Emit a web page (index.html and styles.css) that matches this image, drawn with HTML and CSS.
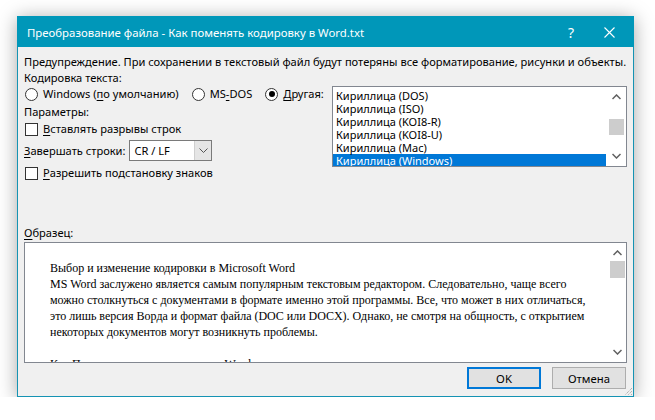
FILE: index.html
```html
<!DOCTYPE html>
<html lang="ru">
<head>
<meta charset="UTF-8" />
<title>Преобразование файла</title>
<link rel="stylesheet" href="styles.css">
</head>
<body>
<div class="dialog">
	<div class="titlebar">
		<span class="title">Преобразование файла - Как поменять кодировку в Word.txt</span>
		<span class="help">?</span>
		<svg class="close" width="11" height="11" viewBox="0 0 11 11"><path d="M0.5 0.5L10.5 10.5M10.5 0.5L0.5 10.5" stroke="#fff" stroke-width="1.1" fill="none"/></svg>
	</div>
	<div class="body">
		<div class="line">Предупреждение. При сохранении в текстовый файл будут потеряны все форматирование, рисунки и объекты.</div>
		<div class="top">
			<div class="opts">
				<div class="line">Кодировка текста:</div>
				<div class="radios">
					<label class="radio"><span class="circle"></span>Windows (<u>п</u>о умолчанию)</label>
					<label class="radio"><span class="circle"></span>MS<u>-</u>DOS</label>
					<label class="radio"><span class="circle on"></span><u>Д</u>ругая:</label>
				</div>
				<div class="line params">Параметры:</div>
				<label class="check"><span class="box"></span><u>В</u>ставлять разрывы строк</label>
				<div class="eol">
					<span><u>З</u>авершать строки:</span>
					<div class="select">
						<span class="value">CR / LF</span>
						<span class="drop"><svg width="9" height="5" viewBox="0 0 9 5"><path d="M0.5 0.5L4.5 4.5L8.5 0.5" stroke="#555" fill="none"/></svg></span>
					</div>
				</div>
				<label class="check"><span class="box"></span><u>Р</u>азрешить подстановку знаков</label>
			</div>
			<div class="list">
				<div class="items">
					<div class="item">Кириллица (DOS)</div>
					<div class="item">Кириллица (ISO)</div>
					<div class="item">Кириллица (KOI8-R)</div>
					<div class="item">Кириллица (KOI8-U)</div>
					<div class="item">Кириллица (Mac)</div>
					<div class="item sel">Кириллица (Windows)</div>
				</div>
				<div class="scroll list-scroll">
					<svg width="9" height="6" viewBox="0 0 9 6"><path d="M0.5 5L4.5 1L8.5 5" stroke="#606060" stroke-width="1.5" fill="none"/></svg>
					<span class="thumb"></span>
					<svg class="down" width="9" height="6" viewBox="0 0 9 6"><path d="M0.5 1L4.5 5L8.5 1" stroke="#606060" stroke-width="1.5" fill="none"/></svg>
				</div>
			</div>
		</div>
		<div class="line sample-label"><u>О</u>бразец:</div>
		<div class="sample">
			<div class="text">
				<div>Выбор и изменение кодировки в Microsoft Word</div>
				<div>MS Word заслужено является самым популярным текстовым редактором. Следовательно, чаще всего</div>
				<div>можно столкнуться с документами в формате именно этой программы. Все, что может в них отличаться,</div>
				<div>это лишь версия Ворда и формат файла (DOC или DOCX). Однако, не смотря на общность, с открытием</div>
				<div>некоторых документов могут возникнуть проблемы.</div>
				<div>&nbsp;</div>
				<div>Как Поменять кодировку текста в Word</div>
			</div>
			<div class="scroll sample-scroll">
				<svg width="9" height="6" viewBox="0 0 9 6"><path d="M0.5 5L4.5 1L8.5 5" stroke="#606060" stroke-width="1.5" fill="none"/></svg>
				<span class="thumb"></span>
				<svg class="down" width="9" height="6" viewBox="0 0 9 6"><path d="M0.5 1L4.5 5L8.5 1" stroke="#606060" stroke-width="1.5" fill="none"/></svg>
			</div>
		</div>
		<div class="buttons">
			<button type="button" class="btn ok">OK</button>
			<button type="button" class="btn">Отмена</button>
		</div>
	</div>
	<svg class="grip" width="10" height="10" viewBox="0 0 10 10"><path d="M9 2L2 9M9 5L5 9M9 8L8 9" stroke="#9a9a9a" stroke-dasharray="1 1" fill="none"/></svg>
</div>
</body>
</html>
```

FILE: styles.css
```css
body{
	margin: 0;
	background: #fff;
	font-family: "Noto Sans", "Liberation Sans", sans-serif;
	font-size: 11.1px;
	color: #000;
}
u{
	text-decoration-thickness: 1px;
	text-underline-offset: 2px;
}
.dialog{
	position: relative;
	margin: 16px 0 0 17px;
	width: 615px;
	height: 379px;
	border: 1px solid #1593b3;
	background: #f0f0f0;
	box-shadow: 0 2px 18px rgba(0, 0, 0, 0.35);
	display: flex;
	flex-direction: column;
}
.titlebar{
	height: 30px;
	background: #0097b9;
	color: #fff;
	display: flex;
	align-items: center;
	padding: 0 0 0 9px;
	margin: -1px -1px 0 -1px;
	border: 1px solid #0097b9;
	border-bottom: 0;
}
.title{
	flex: 1;
	font-size: 11.4px;
}
.help{
	font-size: 14px;
	width: 46px;
	text-align: center;
}
.close{
	margin: 0 18px 0 10px;
}
.body{
	flex: 1;
	display: flex;
	flex-direction: column;
	padding: 7px 6px 0 6px;
}
.line{
	height: 16px;
	line-height: 16px;
	white-space: nowrap;
}
.top{
	display: flex;
}
.opts{
	flex: none;
	display: flex;
	flex-direction: column;
}
.radios{
	display: flex;
	height: 16px;
	align-items: center;
}
.radio, .check{
	display: flex;
	align-items: center;
	white-space: nowrap;
	line-height: 16px;
}
.radio{
	margin-right: 12px;
}
.radio:last-child{
	margin-right: 0;
}
.circle{
	width: 11px;
	height: 11px;
	border: 1px solid #333;
	border-radius: 50%;
	background: #fff;
	margin: 0 5px 0 1px;
	display: flex;
	align-items: center;
	justify-content: center;
}
.circle.on::after{
	content: "";
	width: 6px;
	height: 6px;
	border-radius: 50%;
	background: #000;
}
.params{
	margin-top: 2px;
}
.check{
	height: 16px;
	margin-top: 1px;
}
.box{
	width: 11px;
	height: 11px;
	border: 1px solid #333;
	background: #fff;
	margin: 0 5px 0 1px;
}
.eol{
	display: flex;
	align-items: center;
	margin: 3px 0 3px 0;
}
.select{
	display: flex;
	width: 81px;
	height: 19px;
	border: 1px solid #7a7a7a;
	background: #fff;
	margin-left: 4px;
}
.select .value{
	flex: 1;
	line-height: 19px;
	padding-left: 4px;
}
.drop{
	width: 16px;
	background: #e5e5e5;
	border-left: 1px solid #cfcfcf;
	display: flex;
	align-items: center;
	justify-content: center;
}
.list{
	flex: none;
	margin: 16px 0 0 auto;
	width: 293px;
	height: 79px;
	border: 1px solid #828790;
	background: #fff;
	display: flex;
	overflow: hidden;
	font-size: 11px;
}
.items{
	flex: 1;
	padding-top: 2px;
}
.item{
	height: 13px;
	line-height: 13px;
	padding-left: 3px;
	white-space: nowrap;
}
.item.sel{
	background: #0078d7;
	color: #fff;
	height: 12px;
	margin-right: 1px;
}
.scroll{
	width: 17px;
	background: #fff;
	display: flex;
	flex-direction: column;
	align-items: center;
}
.scroll svg{
	margin-top: 7px;
}
.scroll .down{
	margin-top: auto;
	margin-bottom: 7px;
}
.thumb{
	width: 15px;
	background: #cdcdcd;
}
.list-scroll{
	width: 19px;
}
.list-scroll .thumb{
	height: 16px;
	margin-top: 19px;
}
.sample-label{
	margin-top: 44px;
}
.sample{
	margin-top: 1px;
	height: 119px;
	border: 1px solid #828790;
	background: #fff;
	display: flex;
	overflow: hidden;
}
.text{
	flex: 1;
	padding: 17px 0 0 25px;
	font-family: "Liberation Serif", serif;
	font-size: 12px;
	line-height: 16px;
	white-space: nowrap;
	overflow: hidden;
}
.sample-scroll .thumb{
	height: 17px;
	margin-top: 5px;
}
.buttons{
	display: flex;
	justify-content: flex-end;
	gap: 11px;
	margin-top: 4px;
	padding-right: 1px;
}
.btn{
	width: 74px;
	height: 22px;
	border: 1px solid #adadad;
	background: #e1e1e1;
	font-family: "Noto Sans", "Liberation Sans", sans-serif;
	font-size: 11.3px;
	color: #000;
	padding: 0;
}
.btn.ok{
	border: 2px solid #0078d7;
}
.grip{
	position: absolute;
	right: 0;
	bottom: 0;
}
```
